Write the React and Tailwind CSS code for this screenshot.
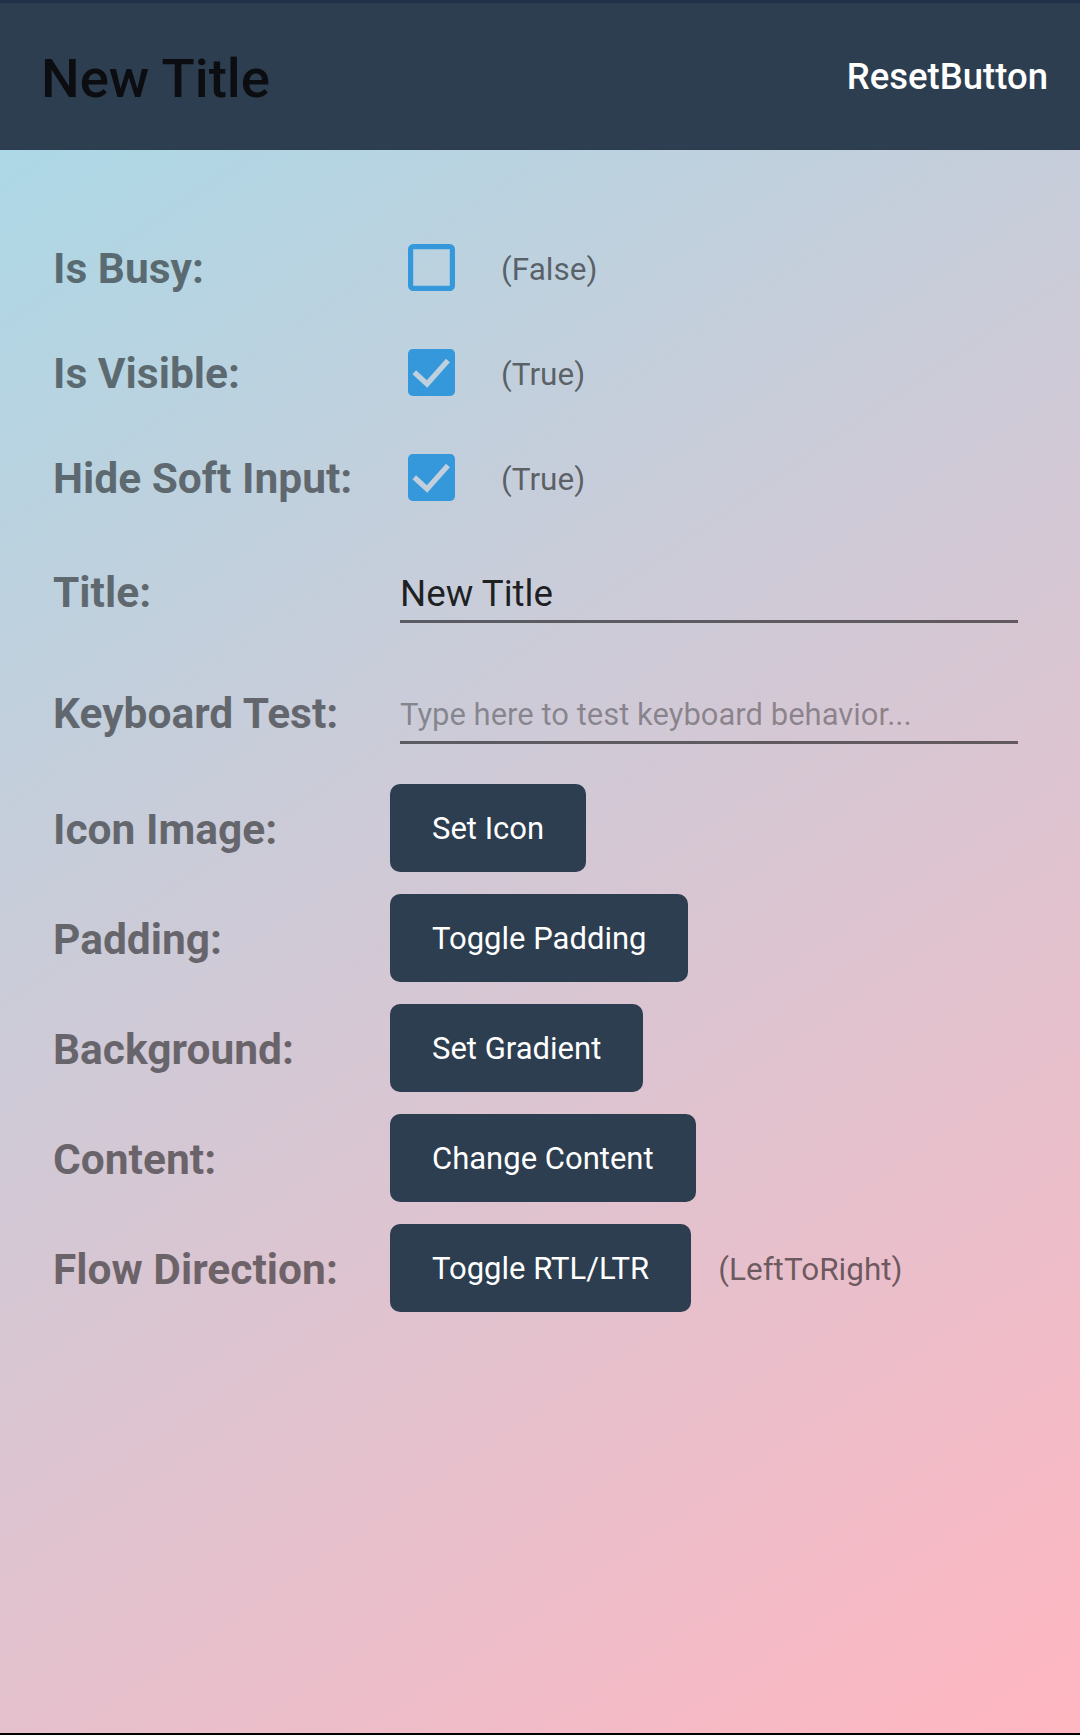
import { useState } from "react";

const font = "font-['Roboto',sans-serif]";

const Checkbox = ({ checked, id }) => (
  <svg width="47" height="47" viewBox="0 0 18 18" className="shrink-0">
    {checked ? (
      <>
        <mask id={id}>
          <rect x="0" y="0" width="18" height="18" fill="white" />
          <polyline
            points="2.4,8.9 7.3,13.4 15.3,4.4"
            fill="none"
            stroke="black"
            strokeWidth="2"
          />
        </mask>
        <rect x="0" y="0" width="18" height="18" rx="1.8" fill="#3498db" mask={`url(#${id})`} />
      </>
    ) : (
      <rect x="1" y="1" width="16" height="16" rx="1" fill="none" stroke="#3498db" strokeWidth="2" />
    )}
  </svg>
);

const Label = ({ children }) => (
  <div className="w-[337px] shrink-0 pt-[4px] text-[42.5px] font-bold text-black/50 leading-none">
    {children}
  </div>
);

const CheckRow = ({ label, checked, id }) => (
  <div className="flex items-center h-[105px]">
    <Label>{label}</Label>
    <div className="ml-[18px]">
      <Checkbox checked={checked} id={id} />
    </div>
    <span className="ml-[46px] pt-[4px] text-[31.5px] text-black/55">
      ({checked ? "True" : "False"})
    </span>
  </div>
);

const ButtonRow = ({ label, text, status }) => (
  <div className="flex items-center h-[88px]">
    <Label>{label}</Label>
    <button className="h-[88px] px-[42px] pt-[3px] rounded-[10px] bg-[#2c3e50] text-white text-[31px]">
      {text}
    </button>
    {status && (
      <span className="ml-[27px] pt-[4px] text-[31.5px] text-black/55">({status})</span>
    )}
  </div>
);

export default function App() {
  const [title, setTitle] = useState("New Title");

  return (
    <div className={`${font} w-[1080px] h-[1735px] flex flex-col`}>
      {/* Toolbar */}
      <header className="h-[150px] shrink-0 border-t-[3px] border-[#1e3148] bg-[#2c3e50] flex items-center justify-between pl-[41px] pr-[32px]">
        <h1 className="pt-[4px] text-[54.5px] font-medium text-[#0b0d10]">{title}</h1>
        <span className="pt-[2px] text-[36.5px] font-medium text-white">ResetButton</span>
      </header>

      {/* Page */}
      <main className="flex-1 bg-[linear-gradient(145.7deg,#add8e6,#ffb6c1)] pl-[53px] pt-[65px] flex flex-col">
        <CheckRow label="Is Busy:" checked={false} id="cb-busy" />
        <CheckRow label="Is Visible:" checked id="cb-visible" />
        <CheckRow label="Hide Soft Input:" checked id="cb-soft" />

        <div className="flex items-center h-[63px] mt-[30px]">
          <Label>Title:</Label>
          <input
            value={title}
            onChange={(e) => setTitle(e.target.value)}
            className="ml-[10px] w-[618px] h-full pt-[6px] border-b-[3px] border-black/55 bg-transparent outline-none text-[36.75px] text-black/85"
          />
        </div>

        <div className="flex items-center h-[63px] mt-[58px]">
          <Label>Keyboard Test:</Label>
          <input
            placeholder="Type here to test keyboard behavior..."
            className="ml-[10px] w-[618px] h-full pt-[6px] border-b-[3px] border-black/55 bg-transparent outline-none text-[31px] text-black/85 placeholder:text-black/35"
          />
        </div>

        <div className="flex flex-col gap-[22px] mt-[40px]">
          <ButtonRow label="Icon Image:" text="Set Icon" />
          <ButtonRow label="Padding:" text="Toggle Padding" />
          <ButtonRow label="Background:" text="Set Gradient" />
          <ButtonRow label="Content:" text="Change Content" />
          <ButtonRow label="Flow Direction:" text="Toggle RTL/LTR" status="LeftToRight" />
        </div>
      </main>
      <div className="h-[2px] shrink-0 bg-black" />
    </div>
  );
}
